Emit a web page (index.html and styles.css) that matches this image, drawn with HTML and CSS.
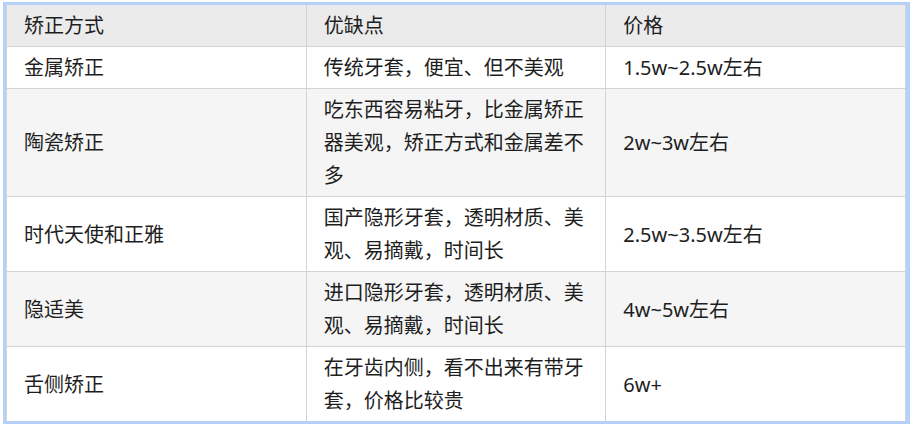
FILE: index.html
```html
<!DOCTYPE html>
<html lang="zh-CN">
<head>
<meta charset="utf-8">
<link rel="stylesheet" href="styles.css">
</head>
<body>
<div class="frame">
<table class="grid">
<thead>
<tr><th>矫正方式</th><th>优缺点</th><th>价格</th></tr>
</thead>
<tbody>
<tr><td>金属矫正</td><td>传统牙套，便宜、但不美观</td><td>1.5w~2.5w左右</td></tr>
<tr><td>陶瓷矫正</td><td>吃东西容易粘牙，比金属矫正器美观，矫正方式和金属差不多</td><td>2w~3w左右</td></tr>
<tr><td>时代天使和正雅</td><td>国产隐形牙套，透明材质、美观、易摘戴，时间长</td><td>2.5w~3.5w左右</td></tr>
<tr><td>隐适美</td><td>进口隐形牙套，透明材质、美观、易摘戴，时间长</td><td>4w~5w左右</td></tr>
<tr><td>舌侧矫正</td><td>在牙齿内侧，看不出来有带牙套，价格比较贵</td><td>6w+</td></tr>
</tbody>
</table>
</div>
</body>
</html>
```
FILE: styles.css
```css
html, body {
  margin: 0;
  padding: 0;
  background: #ffffff;
}
body {
  padding: 2px 0 0 3px;
}
.frame {
  width: 900px;
  border: 3px solid #b5d1f7;
  border-right-width: 4px;
}
.grid {
  width: 900px;
  border-collapse: collapse;
  table-layout: fixed;
  font-family: "Noto Sans", "Noto Sans CJK SC", sans-serif;
  font-size: 20px;
  color: #1e1e1e;
}
.grid th, .grid td {
  width: 33.33%;
  padding: 4px 17px;
  line-height: 33px;
  text-align: left;
  vertical-align: middle;
  font-weight: normal;
  border: 1px solid #d3d3d3;
}
.grid th {
  background: #ebebeb;
  border-top: none;
}
.grid tbody tr:nth-child(even) td {
  background: #f5f5f5;
}
.grid tbody tr:last-child td {
  border-bottom: none;
}
.grid tr > :first-child {
  border-left: 1px solid #d3d3d3;
}
```
